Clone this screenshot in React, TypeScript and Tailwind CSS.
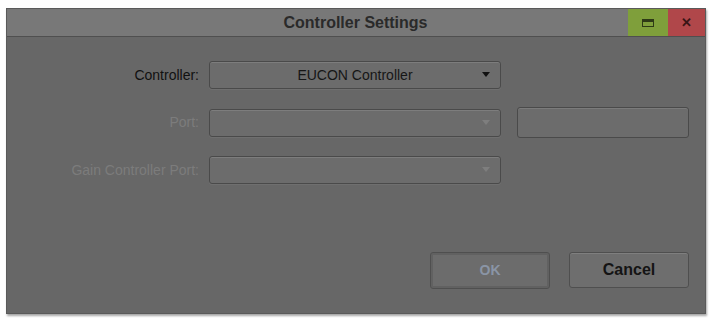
import { useState } from 'react';

const FONT = { fontFamily: '"Liberation Sans", Arial, sans-serif' };

function Dropdown({ value, disabled }: { value?: string; disabled?: boolean }) {
  return (
    <div
      className={`relative flex h-[28px] w-[292px] items-center justify-center rounded-[3px] border border-[#4a4a4a] bg-[#6c6c6c] shadow-[inset_0_1px_0_rgba(255,255,255,0.12),0_1px_0_rgba(255,255,255,0.06)]`}
    >
      <span className="text-[14px] text-[#161616]">{value}</span>
      <span
        className={`absolute right-[10px] top-[10px] h-0 w-0 border-x-[4px] border-t-[5px] border-x-transparent ${
          disabled ? 'border-t-[#7e7e7e]' : 'border-t-[#111]'
        }`}
      />
    </div>
  );
}

export default function App() {
  const [ctrl] = useState('EUCON Controller');
  return (
    <div className="h-[318px] w-[712px] bg-white pl-[6px] pt-[8px]" style={FONT}>
      <div className="flex h-[306px] w-[700px] flex-col border border-[#5a5a5a] bg-[#676767] shadow-[1px_2px_2px_rgba(0,0,0,0.35)]">
        {/* Title bar */}
        <div className="flex h-[28px] items-stretch border-b border-[#4f4f4f] bg-[#787878]">
          <div className="flex flex-1 items-center justify-center pl-[76px] text-[16px] font-bold text-[#2a2a2a]">
            Controller Settings
          </div>
          <div className="flex w-[40px] items-center justify-center bg-[#7f9f3b]">
            <div className="h-[8px] w-[12px] border border-[#2e3a16] border-t-[3px]" />
          </div>
          <div className="flex w-[37px] items-center justify-center bg-[#b0474a] text-[13px] font-bold text-[#3a1516]">
            ✕
          </div>
        </div>

        {/* Body */}
        <div className="flex flex-1 flex-col pt-[24px]">
          <div className="grid grid-cols-[202px_292px_16px_172px] items-center gap-y-[18px]">
            <div className="pr-[10px] text-right text-[14px] text-[#111]">Controller:</div>
            <Dropdown value={ctrl} />
            <div />
            <div />

            <div className="pr-[10px] text-right text-[14px] text-[#7c7c7c]">Port:</div>
            <Dropdown disabled />
            <div />
            <div className="h-[31px] rounded-[3px] border border-[#4a4a4a] bg-[#6c6c6c] shadow-[inset_0_1px_0_rgba(255,255,255,0.1)]" />

            <div className="pr-[10px] text-right text-[14px] text-[#7c7c7c]">Gain Controller Port:</div>
            <Dropdown disabled />
            <div />
            <div />
          </div>

          <div className="mt-auto mb-[24px] flex justify-end gap-[19px] pr-[16px]">
            <button className="h-[37px] w-[120px] rounded-[3px] border border-[#4f4f4f] bg-[#6c6c6c] text-[14px] font-bold text-[#8a95a6] shadow-[inset_0_0_0_2px_rgba(90,90,90,0.6)]">
              OK
            </button>
            <button className="h-[36px] w-[120px] rounded-[3px] border border-[#4f4f4f] bg-[#6e6e6e] text-[16px] font-bold text-[#141414] shadow-[inset_0_1px_0_rgba(255,255,255,0.12)]">
              Cancel
            </button>
          </div>
        </div>
      </div>
    </div>
  );
}
